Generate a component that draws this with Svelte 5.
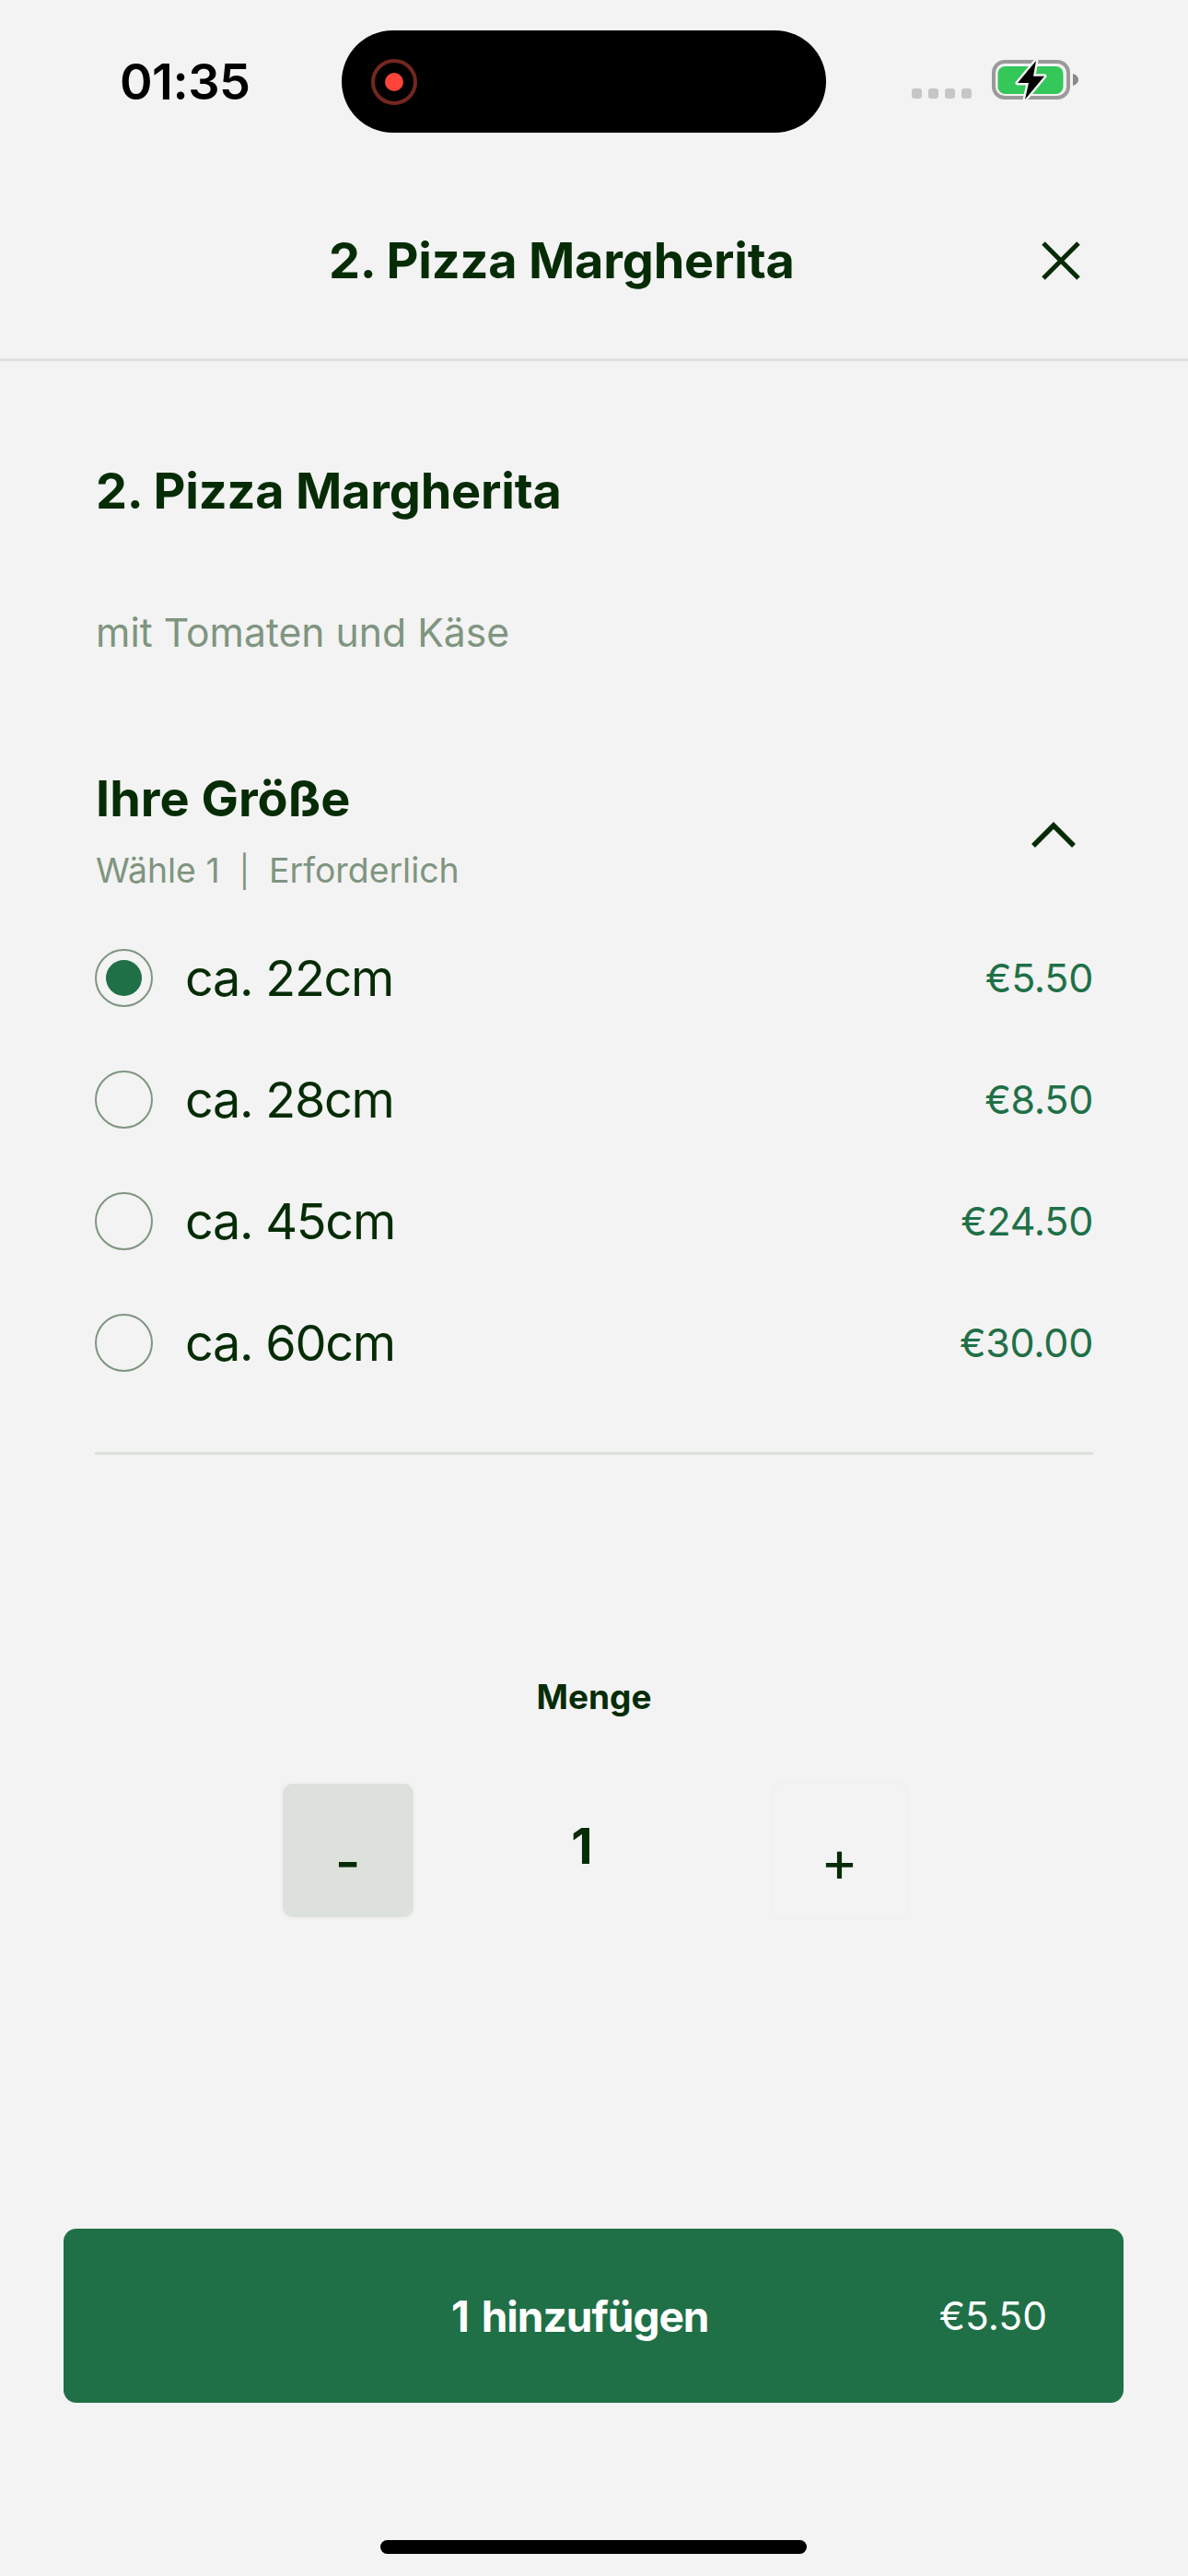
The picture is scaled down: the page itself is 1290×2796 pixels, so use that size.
<script lang="ts">
	const sizes = [
		{ label: 'ca. 22cm', price: '€5.50', selected: true },
		{ label: 'ca. 28cm', price: '€8.50', selected: false },
		{ label: 'ca. 45cm', price: '€24.50', selected: false },
		{ label: 'ca. 60cm', price: '€30.00', selected: false }
	];
</script>

<div class="page">
	<div class="status">
		<span class="time">01:35</span>
		<div class="island">
			<span class="rec"><span class="rec-dot"></span></span>
		</div>
		<div class="status-right">
			<div class="signal"><i></i><i></i><i></i><i></i></div>
			<svg class="battery" width="96" height="48" viewBox="0 0 96 48">
				<rect x="2" y="5" width="81" height="39" rx="12" fill="none" stroke="#9a9a9a" stroke-width="4" />
				<rect x="6.500" y="10" width="71" height="30" rx="8" fill="#34c759" />
				<path d="M88 18c3.500 1 6 3.500 6 6.500S91.500 30 88 31z" fill="#8a8a8a" />
				<path
					d="M48 4 28 28h12l-4 18 21-25.300H45z"
					fill="#000"
					stroke="#f3f3f3"
					stroke-width="5"
					stroke-linejoin="round"
					paint-order="stroke"
				/>
			</svg>
		</div>
	</div>

	<header class="header">
		<h1>2. Pizza Margherita</h1>
		<svg class="close" width="42" height="42" viewBox="0 0 42 42">
			<path d="M2 2l38 38M40 2 2 40" fill="none" stroke="#062c06" stroke-width="5" />
		</svg>
	</header>

	<main class="body">
		<h2 class="item-title">2. Pizza Margherita</h2>
		<p class="desc">mit Tomaten und Käse</p>

		<section class="group">
			<div class="group-head">
				<div>
					<h3>Ihre Größe</h3>
					<p class="hint">Wähle 1&nbsp; <span class="sep">|</span>&nbsp; Erforderlich</p>
				</div>
				<svg class="chevron" width="50" height="30" viewBox="0 0 50 30">
					<path d="M3 27 25 5l22 22" fill="none" stroke="#062c06" stroke-width="5.500" />
				</svg>
			</div>
			<div class="rows">
				{#each sizes as size}
					<div class="row">
						<span class="radio">
							{#if size.selected}<span class="radio-dot"></span>{/if}
						</span>
						<span class="label">{size.label}</span>
						<span class="price">{size.price}</span>
					</div>
				{/each}
			</div>
		</section>

		<section class="qty">
			<div class="qty-title">Menge</div>
			<div class="stepper">
				<button type="button" class="step minus">-</button>
				<span class="count">1</span>
				<button type="button" class="step plus">+</button>
			</div>
		</section>
	</main>

	<button type="button" class="add">
		<span class="add-label">1 hinzufügen</span>
		<span class="add-price">€5.50</span>
	</button>

	<div class="home-bar"></div>
</div>

<style>
	:global(body) {
		margin: 0;
		background: #f3f3f3;
	}
	.page {
		display: flex;
		flex-direction: column;
		height: 2796px;
		overflow: hidden;
		background: #f3f3f3;
		color: #062c06;
		font-family: Inter, 'Liberation Sans', sans-serif;
	}
	.status {
		display: flex;
		align-items: center;
		height: 111px;
		margin-top: 33px;
		padding-left: 130px;
	}
	.time {
		width: 241px;
		color: #000;
		font-size: 54px;
		font-weight: 600;
		letter-spacing: -0.5px;
		line-height: 1;
	}
	.island {
		display: flex;
		align-items: center;
		width: 526px;
		height: 111px;
		padding-left: 32px;
		box-sizing: border-box;
		border-radius: 56px;
		background: #000;
	}
	.rec {
		display: flex;
		align-items: center;
		justify-content: center;
		width: 50px;
		height: 50px;
		box-sizing: border-box;
		border: 4px solid #74271f;
		border-radius: 50%;
	}
	.rec-dot {
		width: 20px;
		height: 20px;
		border-radius: 50%;
		background: #ff453a;
	}
	.status-right {
		display: flex;
		align-items: flex-end;
		gap: 22px;
		margin-left: 93px;
		margin-top: -5px;
	}
	.signal {
		display: flex;
		gap: 7px;
		margin-bottom: 3px;
	}
	.signal i {
		width: 11px;
		height: 11px;
		border-radius: 3px;
		background: #c6c6c6;
	}
	.header {
		display: flex;
		align-items: center;
		justify-content: space-between;
		height: 248px;
		padding: 33px 117px 0 357px;
		box-sizing: border-box;
		border-bottom: 3px solid #dce1db;
	}
	.header h1,
	.item-title {
		margin: 0;
		font-size: 54px;
		font-weight: 700;
		letter-spacing: -0.2px;
		line-height: 64px;
	}
	.close {
		flex: none;
	}
	.body {
		display: flex;
		flex-direction: column;
		flex: 1;
		padding: 0 103px;
	}
	.item-title {
		margin-top: 109px;
		margin-left: 1px;
	}
	.desc {
		margin: 96px 0 0 1px;
		color: #7f9580;
		font-size: 42.700px;
		line-height: 52px;
	}
	.group {
		margin-top: 122px;
		padding-bottom: 84px;
		border-bottom: 3px solid #dce1db;
	}
	.group-head {
		display: flex;
		align-items: center;
		justify-content: space-between;
		padding: 0 18px 0 1px;
	}
	.group-head h3 {
		margin: 0;
		font-size: 54px;
		font-weight: 700;
		line-height: 64px;
	}
	.hint {
		margin: 23px 0 0;
		color: #7f9580;
		font-size: 37.400px;
		line-height: 46px;
	}
	.sep {
		font-size: 34px;
	}
	.chevron {
		flex: none;
		margin-top: 8px;
	}
	.rows {
		display: flex;
		flex-direction: column;
		gap: 62px;
		margin-top: 57px;
	}
	.row {
		display: flex;
		align-items: center;
		height: 70px;
	}
	.radio {
		display: flex;
		align-items: center;
		justify-content: center;
		width: 63px;
		height: 63px;
		box-sizing: border-box;
		border: 2px solid #7f9580;
		border-radius: 50%;
	}
	.radio-dot {
		width: 39px;
		height: 39px;
		border-radius: 50%;
		background: #1f7047;
	}
	.label {
		margin-left: 35px;
		font-size: 54px;
		letter-spacing: -1.300px;
	}
	.price {
		margin-left: auto;
		color: #1f7047;
		font-size: 43px;
		letter-spacing: -0.3px;
	}
	.qty {
		display: flex;
		flex-direction: column;
		align-items: center;
	}
	.qty-title {
		margin-top: 241px;
		font-size: 37px;
		font-weight: 700;
		line-height: 44px;
	}
	.stepper {
		display: flex;
		align-items: flex-start;
		margin-top: 69px;
	}
	.step {
		width: 148px;
		height: 151px;
		padding: 22px 0 0;
		box-sizing: border-box;
		border: 3px solid #f0f1f0;
		border-radius: 14px;
		background: none;
		color: #062c06;
		font: 500 60px Inter, 'Liberation Sans', sans-serif;
	}
	.minus {
		background: #dce1db;
	}
	.plus {
		width: 150px;
		font-size: 62px;
		font-weight: 400;
	}
	.count {
		width: 385px;
		margin-top: 38px;
		padding-right: 24px;
		box-sizing: border-box;
		text-align: center;
		font-size: 54px;
		font-weight: 700;
		line-height: 66px;
	}
	.add {
		position: relative;
		display: flex;
		align-items: center;
		flex: none;
		height: 189px;
		margin: 0 70px 0 69px;
		padding: 0 83px 0 0;
		border: none;
		border-radius: 14px;
		background: #1f7047;
		color: #fff;
		font-family: inherit;
	}
	.add-label {
		margin-left: 421px;
		font-size: 46px;
		font-weight: 700;
		letter-spacing: -1px;
		word-spacing: 4px;
	}
	.add-price {
		margin-left: auto;
		font-size: 42.500px;
	}
	.home-bar {
		flex: none;
		width: 463px;
		height: 15px;
		margin: 149px 0 24px 413px;
		border-radius: 8px;
		background: #000;
	}
</style>
